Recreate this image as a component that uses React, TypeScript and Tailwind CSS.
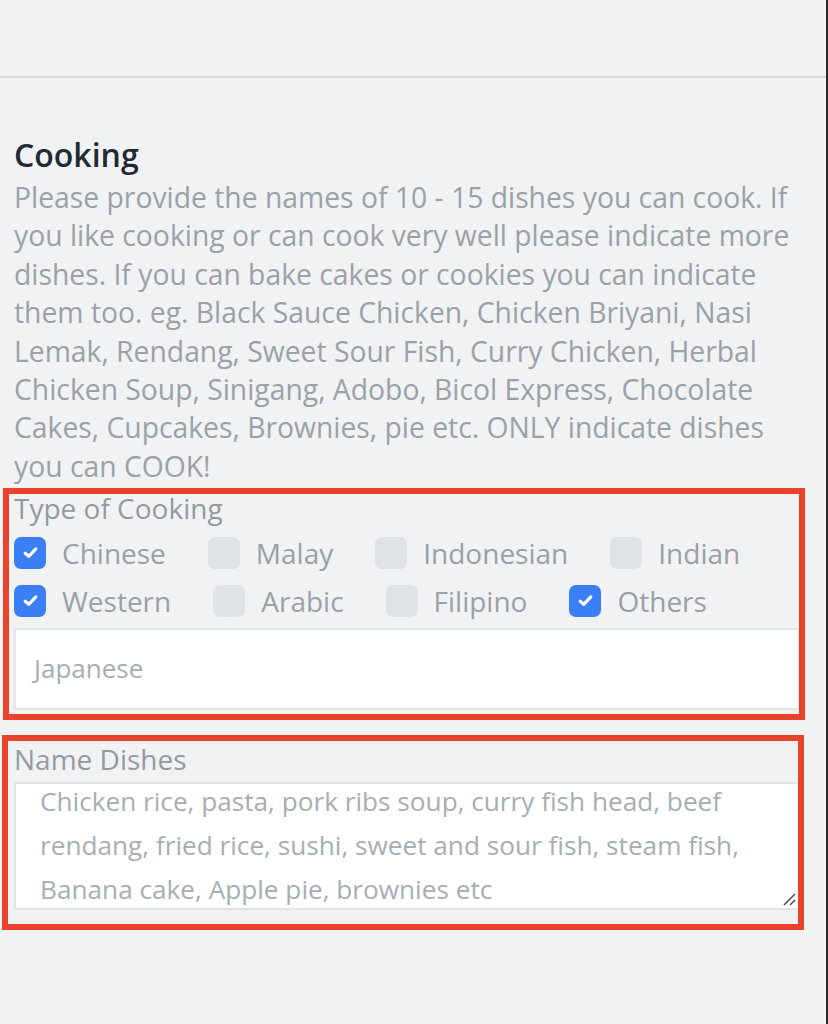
import React from "react";

const Check = () => (
  <svg viewBox="0 0 16 16" className="w-[17px] h-[17px]">
    <path d="M3 8.6l3.3 3.1L13 4.6" fill="none" stroke="white" strokeWidth="3" strokeLinecap="round" strokeLinejoin="round" />
  </svg>
);

function Box({ checked, label }: { checked?: boolean; label: string }) {
  return (
    <div className="flex items-center h-[48px] mr-[42px]">
      {checked ? (
        <div className="w-[32px] h-[32px] rounded-[7px] bg-[#3a7ff6] flex items-center justify-center">
          <Check />
        </div>
      ) : (
        <div className="w-[32px] h-[32px] rounded-[7px] bg-[#dfe2e6]" />
      )}
      <span className="ml-[16px] text-[28px] leading-[38px] text-[#9aa0a5]">{label}</span>
    </div>
  );
}

const para = [
  "Please provide the names of 10 - 15 dishes you can cook. If",
  "you like cooking or can cook very well please indicate more",
  "dishes. If you can bake cakes or cookies you can indicate",
  "them too. eg. Black Sauce Chicken, Chicken Briyani, Nasi",
  "Lemak, Rendang, Sweet Sour Fish, Curry Chicken, Herbal",
  "Chicken Soup, Sinigang, Adobo, Bicol Express, Chocolate",
  "Cakes, Cupcakes, Brownies, pie etc. ONLY indicate dishes",
  "you can COOK!",
];

const dishes = [
  "Chicken rice, pasta, pork ribs soup, curry fish head, beef",
  "rendang, fried rice, sushi, sweet and sour fish, steam fish,",
  "Banana cake, Apple pie, brownies etc",
];

export default function App() {
  return (
    <div className="relative w-[828px] h-[1024px] bg-[#f1f2f4] font-['Open_Sans',sans-serif] overflow-hidden">
      <div className="flex h-full">
        <div className="flex-1 flex flex-col">
          <div className="h-[78px] border-b-2 border-[#dadbde] shrink-0" />
          <div className="pl-[14px] pr-[26px] pt-[57px]">
            <h2 className="text-[32px] leading-[40px] font-semibold text-[#1f2a33]">Cooking</h2>
            <p className="mt-[3px] text-[28.3px] leading-[38.4px] text-[#9ba1a6] whitespace-nowrap">
              {para.map((l, i) => (
                <span key={i} className="block">{l}</span>
              ))}
            </p>
            <div className="mt-[4px] text-[28px] leading-[38.4px] text-[#959a9f]">Type of Cooking</div>
            <div className="mt-[1px] flex">
              <Box checked label="Chinese" />
              <Box label="Malay" />
              <Box label="Indonesian" />
              <Box label="Indian" />
            </div>
            <div className="flex">
              <Box checked label="Western" />
              <Box label="Arabic" />
              <Box label="Filipino" />
              <Box checked label="Others" />
            </div>
            <div className="mt-[3px] h-[82px] border-2 border-[#e1e4e8] bg-white flex items-center px-[18px]">
              <span className="text-[26px] text-[#a6aeb4]">Japanese</span>
            </div>
            <div className="mt-[30px] text-[28px] leading-[38.4px] text-[#959a9f]">Name Dishes</div>
            <div className="relative mt-[4px] h-[128px] border-2 border-[#e1e4e8] bg-white overflow-hidden pl-[24px]">
              <div className="-mt-[5px] text-[26.2px] leading-[44px] text-[#a6aeb4] whitespace-nowrap">
                {dishes.map((l, i) => (
                  <span key={i} className="block">{l}</span>
                ))}
              </div>
              <svg className="absolute right-[2px] bottom-[2px] w-[14px] h-[14px]" viewBox="0 0 14 14">
                <path d="M2 13L13 2M8 13L13 8" stroke="#555" strokeWidth="1.6" />
              </svg>
            </div>
          </div>
        </div>
        <div className="w-[2px] bg-[#2b2b2b]" />
      </div>
      <div className="absolute left-[3px] top-[488px] w-[802px] h-[232px] border-[6px] border-[#e9442b]" />
      <div className="absolute left-[2px] top-[735px] w-[802px] h-[195px] border-[6px] border-[#e9442b]" />
    </div>
  );
}
